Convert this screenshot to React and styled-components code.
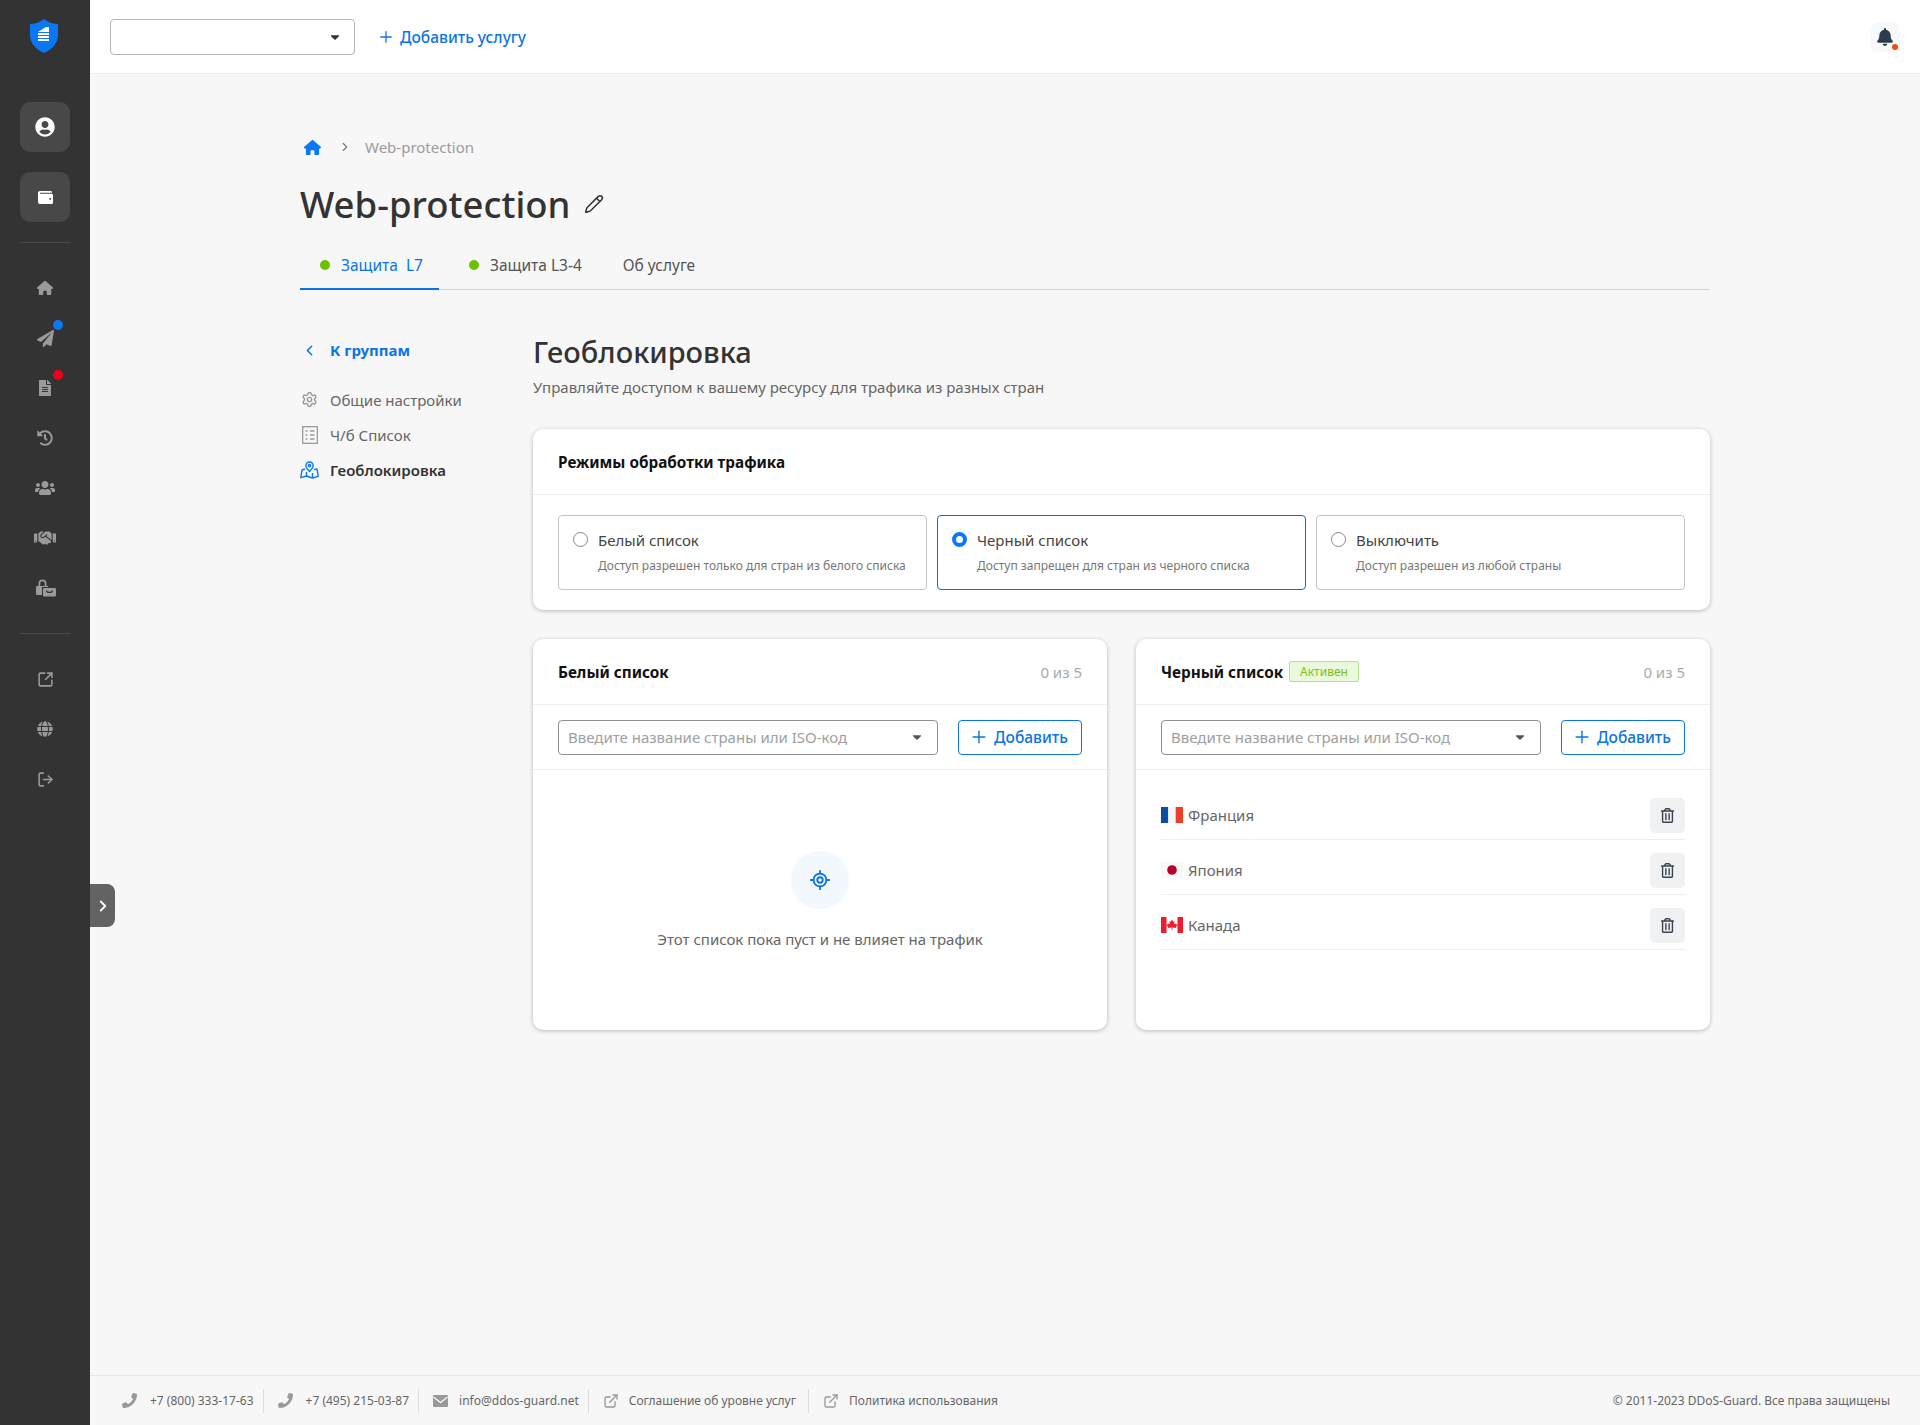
import React from 'react'
import styled, { createGlobalStyle } from 'styled-components'
import { ChevronLeft, ChevronRight, ExternalLink, LocateFixed, LogOut, Pencil, Plus, Settings, SquareArrowOutUpRight } from 'lucide-react'
import { FaBell, FaCaretDown, FaFileAlt, FaGlobe, FaHandshake, FaHistory, FaPaperPlane, FaPhoneAlt, FaRegTrashAlt, FaUserCircle, FaUsers, FaWallet } from 'react-icons/fa'
import { FaHouse } from 'react-icons/fa6'

const Global = createGlobalStyle`
  html, body { margin: 0; padding: 0; }
  body { font-family: "Noto Sans", "Open Sans", sans-serif; background: #f7f7f7; color: #333; }
  * { box-sizing: border-box; }
`

const BLUE = '#0b74e5'

function Logo() {
  return (
    <svg width="30" height="34" viewBox="0 0 30 34">
      <path d="M15 0 C19 3 24 5 29 5 L29 16 C29 25 22 31 15 34 C8 31 1 25 1 16 L1 5 C6 5 11 3 15 0Z" fill="#0a78f5" />
      <path d="M9 22 L9 13 L17 8 L20 8 L20 22Z" fill="#fff" />
      <path d="M9 13.5h11M9 16.5h11M9 19.5h11" stroke="#0a78f5" strokeWidth="1" />
    </svg>
  )
}

function LockIcon() {
  return (
    <svg width="21" height="18" viewBox="0 0 21 18" fill="#9a9a9a">
      <path fillRule="evenodd" d="M2 7h1.5V4.5a4 4 0 0 1 8 0V7H13v1H7v8H2a1 1 0 0 1-1-1V8a1 1 0 0 1 1-1zm3.2 0h4.6V4.5a2.3 2.3 0 0 0-4.6 0z" />
      <rect x="8" y="9" width="13" height="8.5" rx="1.2" />
      <path d="M11.5 11.5c0 2.6 6 2.6 6 0" stroke="#333" strokeWidth="1.2" fill="none" />
    </svg>
  )
}

function ListIcon() {
  return (
    <svg width="16" height="18" viewBox="0 0 16 18" fill="none" stroke="#9a9a9a" strokeWidth="1.3">
      <rect x="0.7" y="0.7" width="14.6" height="16.6" />
      <path d="M3.5 5h2M3.5 9h2M3.5 13h2M8 5h4.5M8 9h4.5M8 13h4.5" />
    </svg>
  )
}

function GeoIcon() {
  return (
    <svg width="19" height="18" viewBox="0 0 19 18" fill="none" stroke="#0a78f5" strokeWidth="1.4" strokeLinejoin="round">
      <path d="M9.5 1a3.6 3.6 0 0 0-3.6 3.6c0 2.4 3.6 5.9 3.6 5.9s3.6-3.5 3.6-5.9A3.6 3.6 0 0 0 9.5 1z" />
      <circle cx="9.5" cy="4.6" r="1.1" />
      <path d="M5 8 L2 9 L0.8 16.6 L6.5 15 L12.5 17 L18.2 15.4 L17 8 L14 8.6 M6.5 11 V15 M12.5 12 V17" />
    </svg>
  )
}

function MailIcon() {
  return (
    <svg width="15" height="12" viewBox="0 0 15 12">
      <rect width="15" height="12" rx="1" fill="#999" />
      <path d="M0.5 2 L7.5 7.5 L14.5 2" stroke="#f7f7f7" strokeWidth="1.4" fill="none" />
    </svg>
  )
}

function Flag({ code }) {
  if (code === 'fr') {
    return (
      <svg width="22" height="16" viewBox="0 0 22 16">
        <rect width="7.3" height="16" fill="#0b4ea2" />
        <rect x="7.3" width="7.4" height="16" fill="#f5f5f5" />
        <rect x="14.7" width="7.3" height="16" fill="#ee3e2c" />
      </svg>
    )
  }
  if (code === 'jp') {
    return (
      <svg width="22" height="16" viewBox="0 0 22 16">
        <rect width="22" height="16" fill="#f8f8f8" />
        <circle cx="11" cy="8" r="4.8" fill="#bc002d" />
      </svg>
    )
  }
  return (
    <svg width="22" height="16" viewBox="0 0 22 16">
      <rect width="22" height="16" fill="#fff" />
      <rect width="5.5" height="16" fill="#ee1c2e" />
      <rect x="16.5" width="5.5" height="16" fill="#ee1c2e" />
      <path d="M11 2.5 L12.2 4.8 L13.6 4.2 L13.2 7.2 L15.2 6.4 L15.6 7.8 L17 8 L14.8 10 L15 11 L11.4 10.6 L11.4 13 L10.6 13 L10.6 10.6 L7 11 L7.2 10 L5 8 L6.4 7.8 L6.8 6.4 L8.8 7.2 L8.4 4.2 L9.8 4.8Z" fill="#ee1c2e" />
    </svg>
  )
}

function ListHead({ title, active }) {
  return (
    <CardHead>
      <HeadLeft>
        <CardTitle>{title}</CardTitle>
        {active && <Badge>Активен</Badge>}
      </HeadLeft>
      <Count>0 из 5</Count>
    </CardHead>
  )
}

function AddRow() {
  return (
    <AddBar>
      <CountryInput>
        <span>Введите название страны или ISO-код</span>
        <FaCaretDown size={14} color="#555" />
      </CountryInput>
      <AddButton><Plus size={20} strokeWidth={1.7} />Добавить</AddButton>
    </AddBar>
  )
}

const railTop = [
  [<FaHouse size={16} color="#9a9a9a" />],
  [<FaPaperPlane size={17} color="#9a9a9a" />, '#0a78f5'],
  [<FaFileAlt size={16} color="#9a9a9a" />, '#f0001c'],
  [<FaHistory size={16} color="#9a9a9a" />],
  [<FaUsers size={20} color="#9a9a9a" />],
  [<FaHandshake size={22} color="#9a9a9a" />],
  [<LockIcon />],
]
const railBottom = [
  <SquareArrowOutUpRight size={17} color="#9a9a9a" strokeWidth={2.2} />,
  <FaGlobe size={16} color="#9a9a9a" />,
  <LogOut size={17} color="#9a9a9a" strokeWidth={2.2} />,
]
const modes = [
  ['Белый список', 'Доступ разрешен только для стран из белого списка', false],
  ['Черный список', 'Доступ запрещен для стран из черного списка', true],
  ['Выключить', 'Доступ разрешен из любой страны', false],
]
const countries = [['fr', 'Франция'], ['jp', 'Япония'], ['ca', 'Канада']]

export default function App() {
  return (
    <Page>
      <Global />
      <Rail>
        <LogoBox><Logo /></LogoBox>
        <RailButton><FaUserCircle size={20} color="#fff" /></RailButton>
        <RailButton><FaWallet size={15} color="#fff" /></RailButton>
        <RailLine />
        <RailList>
          {railTop.map(([icon, dot], i) => (
            <RailItem key={i}>
              {icon}
              {dot && <RailDot $color={dot} />}
            </RailItem>
          ))}
        </RailList>
        <RailLine $lower />
        <RailList>
          {railBottom.map((icon, i) => (
            <RailItem key={i}>{icon}</RailItem>
          ))}
        </RailList>
        <RailToggle><ChevronRight size={18} color="#fff" strokeWidth={2.4} /></RailToggle>
      </Rail>

      <Main>
        <TopBar>
          <ServiceSelect><FaCaretDown size={14} color="#333" /></ServiceSelect>
          <AddService><Plus size={18} strokeWidth={1.7} />Добавить услугу</AddService>
          <BellBox>
            <FaBell size={18} color="#2d3b4d" />
            <BellDot />
          </BellBox>
        </TopBar>

        <Content>
          <Crumbs>
            <FaHouse size={17} color="#0a78f5" />
            <CrumbArrow size={14} color="#777" />
            <CrumbText>Web-protection</CrumbText>
          </Crumbs>
          <TitleRow>
            <Title>Web-protection</Title>
            <Pencil size={20} color="#333" strokeWidth={1.8} />
          </TitleRow>
          <Tabs>
            <Tab $active><TabDot />Защита&nbsp; L7</Tab>
            <Tab><TabDot />Защита L3-4</Tab>
            <Tab $plain>Об услуге</Tab>
          </Tabs>

          <Columns>
            <SideNav>
              <BackLink><ChevronLeft size={17} strokeWidth={2.2} />К группам</BackLink>
              <NavItem><NavIcon><Settings size={17} color="#9a9a9a" /></NavIcon>Общие настройки</NavItem>
              <NavItem><NavIcon><ListIcon /></NavIcon>Ч/б Список</NavItem>
              <NavItem $active><NavIcon><GeoIcon /></NavIcon>Геоблокировка</NavItem>
            </SideNav>

            <Section>
              <Heading>Геоблокировка</Heading>
              <Lead>Управляйте доступом к вашему ресурсу для трафика из разных стран</Lead>

              <Card>
                <CardHead><CardTitle>Режимы обработки трафика</CardTitle></CardHead>
                <Modes>
                  {modes.map(([name, text, on]) => (
                    <Mode key={name} $on={on}>
                      <Radio $on={on} />
                      <div>
                        <ModeName>{name}</ModeName>
                        <ModeText>{text}</ModeText>
                      </div>
                    </Mode>
                  ))}
                </Modes>
              </Card>

              <ListGrid>
                <ListCard>
                  <ListHead title="Белый список" />
                  <AddRow />
                  <Empty>
                    <EmptyIcon><LocateFixed size={22} color={BLUE} strokeWidth={2} /></EmptyIcon>
                    <EmptyText>Этот список пока пуст и не влияет на трафик</EmptyText>
                  </Empty>
                </ListCard>

                <ListCard>
                  <ListHead title="Черный список" active />
                  <AddRow />
                  <Countries>
                    {countries.map(([code, name]) => (
                      <Country key={code}>
                        <Flag code={code} />
                        <CountryName>{name}</CountryName>
                        <TrashButton><FaRegTrashAlt size={15} color="#3a4450" /></TrashButton>
                      </Country>
                    ))}
                  </Countries>
                </ListCard>
              </ListGrid>
            </Section>
          </Columns>
        </Content>

        <Footer>
          <FootItem><PhoneIcon size={15} color="#999" />+7 (800) 333-17-63</FootItem>
          <FootItem><PhoneIcon size={15} color="#999" />+7 (495) 215-03-87</FootItem>
          <FootItem $gap={11}><MailIcon />info@ddos-guard.net</FootItem>
          <FootItem $gap={10} $wide><ExternalLink size={16} color="#999" />Соглашение об уровне услуг</FootItem>
          <FootItem $gap={10} $last><ExternalLink size={16} color="#999" />Политика использования</FootItem>
          <Copy>© 2011-2023 DDoS-Guard. Все права защищены</Copy>
        </Footer>
      </Main>
    </Page>
  )
}

const Page = styled.div`
  display: flex;
  min-height: 1425px;
`

const Rail = styled.aside`
  position: relative;
  width: 90px;
  flex-shrink: 0;
  background: #333;
  display: flex;
  flex-direction: column;
  align-items: center;
`

const LogoBox = styled.div`
  height: 102px;
  width: 100%;
  padding: 19px 2px 0 0;
  display: flex;
  justify-content: center;
  align-items: flex-start;
`

const RailButton = styled.div`
  width: 50px;
  height: 50px;
  margin-bottom: 20px;
  background: #484848;
  border-radius: 10px;
  display: flex;
  align-items: center;
  justify-content: center;
`

const RailLine = styled.div`
  width: 50px;
  height: 1px;
  background: #4a4a4a;
  margin: ${p => (p.$lower ? '20px 0 20px' : '0 0 20px')};
`

const RailList = styled.div`
  display: flex;
  flex-direction: column;
  align-items: center;
`

const RailItem = styled.div`
  position: relative;
  width: 50px;
  height: 50px;
  display: flex;
  align-items: center;
  justify-content: center;
`

const RailDot = styled.span`
  position: absolute;
  top: 7px;
  right: 7px;
  width: 10px;
  height: 10px;
  border-radius: 50%;
  background: ${p => p.$color};
`

const RailToggle = styled.div`
  position: absolute;
  left: 90px;
  top: 884px;
  width: 25px;
  height: 43px;
  background: #636363;
  border-radius: 0 8px 8px 0;
  display: flex;
  align-items: center;
  justify-content: center;
`

const Main = styled.main`
  flex: 1;
  min-width: 0;
  display: flex;
  flex-direction: column;
`

const TopBar = styled.header`
  height: 74px;
  background: #fff;
  border-bottom: 1px solid #eee;
  padding: 0 20px;
  display: flex;
  align-items: center;
  gap: 22px;
`

const ServiceSelect = styled.div`
  width: 245px;
  height: 36px;
  margin-top: 1px;
  background: #fff;
  border: 1px solid #b5b5b5;
  border-radius: 4px;
  display: flex;
  align-items: center;
  justify-content: flex-end;
  padding-right: 12px;
`

const AddService = styled.div`
  display: flex;
  align-items: center;
  gap: 5px;
  font-size: 15.5px;
  font-weight: 500;
  color: ${BLUE};
`

const BellBox = styled.div`
  position: relative;
  margin-left: auto;
  width: 30px;
  height: 30px;
  background: #f8f9fa;
  border-radius: 8px;
  display: flex;
  align-items: center;
  justify-content: center;
`

const BellDot = styled.span`
  position: absolute;
  right: 2px;
  bottom: 2px;
  width: 6px;
  height: 6px;
  border-radius: 50%;
  background: #f04a0c;
`

const Content = styled.div`
  flex: 1;
  padding: 62px 210px 0;
`

const Crumbs = styled.div`
  height: 22px;
  padding-left: 4px;
  display: flex;
  align-items: center;
  gap: 14px;
`

const CrumbArrow = styled(ChevronRight)`
  margin-left: 3px;
`

const CrumbText = styled.span`
  margin-left: -1px;
  font-size: 15px;
  color: #9c9c9c;
`

const TitleRow = styled.div`
  margin-top: 21px;
  height: 50px;
  display: flex;
  align-items: center;
  gap: 14px;
`

const Title = styled.h1`
  margin: 0;
  font-size: 36.5px;
  font-weight: 500;
  color: #333;
`

const Tabs = styled.div`
  margin-top: 11px;
  height: 50px;
  border-bottom: 1px solid #d5d5d5;
  display: flex;
`

const Tab = styled.div`
  height: 50px;
  padding: 2px 16px 0 ${p => (p.$plain ? '15px' : '20px')};
  margin-right: 10px;
  display: flex;
  align-items: center;
  gap: 11px;
  font-size: 15.5px;
  color: ${p => (p.$active ? BLUE : '#555')};
  border-bottom: 2px solid ${p => (p.$active ? BLUE : 'transparent')};
`

const TabDot = styled.span`
  width: 10px;
  height: 10px;
  border-radius: 50%;
  background: #6cc000;
`

const Columns = styled.div`
  display: flex;
`

const SideNav = styled.nav`
  width: 233px;
  flex-shrink: 0;
  padding-top: 48px;
  display: flex;
  flex-direction: column;
`

const BackLink = styled.div`
  height: 24px;
  margin-bottom: 20px;
  display: flex;
  align-items: center;
  gap: 12px;
  padding-left: 1px;
  font-size: 15px;
  font-weight: 700;
  color: ${BLUE};
`

const NavItem = styled.div`
  height: 35px;
  display: flex;
  align-items: center;
  gap: 11px;
  font-size: 15px;
  font-weight: ${p => (p.$active ? 600 : 400)};
  color: ${p => (p.$active ? '#333' : '#666')};
`

const NavIcon = styled.span`
  width: 19px;
  display: flex;
  justify-content: center;
`

const Section = styled.section`
  flex: 1;
  min-width: 0;
  padding-top: 42px;
`

const Heading = styled.h2`
  margin: 0;
  height: 40px;
  line-height: 40px;
  font-size: 29px;
  font-weight: 500;
  color: #333;
`

const Lead = styled.p`
  margin: 3px 0 0;
  height: 24px;
  line-height: 24px;
  font-size: 15px;
  color: #666;
`

const Card = styled.div`
  margin-top: 30px;
  background: #fff;
  border-radius: 10px;
  box-shadow: 0 1px 4px rgba(0, 0, 0, 0.25);
`

const CardHead = styled.div`
  height: 66px;
  padding: 0 25px;
  border-bottom: 1px solid #eee;
  display: flex;
  align-items: center;
  justify-content: space-between;
`

const HeadLeft = styled.div`
  display: flex;
  align-items: center;
  gap: 6px;
`

const CardTitle = styled.div`
  font-size: 15.3px;
  font-weight: 700;
  color: #111;
`

const Badge = styled.span`
  height: 21px;
  padding: 0 10px;
  background: #eaf8dc;
  border: 1px solid #b6e08c;
  border-radius: 2px;
  font-size: 12px;
  line-height: 19px;
  color: #77c31a;
`

const Count = styled.span`
  font-size: 15px;
  color: #aaa;
`

const Modes = styled.div`
  padding: 20px 25px;
  display: grid;
  grid-template-columns: repeat(3, 1fr);
  gap: 10px;
`

const Mode = styled.div`
  height: 75px;
  padding: 13px 14px;
  display: flex;
  gap: 10px;
  border: 1px solid ${p => (p.$on ? '#0a6fd8' : '#c4c4c4')};
  border-radius: 4px;
`

const Radio = styled.span`
  width: 15px;
  height: 15px;
  margin-top: 3px;
  flex-shrink: 0;
  border-radius: 50%;
  background: #fff;
  border: ${p => (p.$on ? '4px solid #0a78f5' : '1px solid #888')};
`

const ModeName = styled.div`
  font-size: 15px;
  line-height: 22px;
  color: #444;
`

const ModeText = styled.div`
  margin-top: 7px;
  font-size: 12px;
  line-height: 16px;
  color: #777;
`

const ListGrid = styled.div`
  margin-top: 29px;
  display: grid;
  grid-template-columns: 1fr 1fr;
  gap: 29px;
`

const ListCard = styled(Card)`
  margin-top: 0;
  height: 391px;
  display: flex;
  flex-direction: column;
`

const AddBar = styled.div`
  height: 65px;
  padding: 0 25px;
  border-bottom: 1px solid #eee;
  display: flex;
  align-items: center;
  gap: 20px;
`

const CountryInput = styled.div`
  flex: 1;
  height: 35px;
  padding: 0 13px 0 9px;
  background: #fff;
  border: 1px solid #8f8f8f;
  border-radius: 4px;
  display: flex;
  align-items: center;
  justify-content: space-between;
  font-size: 15px;
  color: #a0a0a0;
`

const AddButton = styled.div`
  width: 124px;
  height: 35px;
  padding-right: 3px;
  background: #fff;
  border: 1px solid ${BLUE};
  border-radius: 4px;
  display: flex;
  align-items: center;
  justify-content: center;
  gap: 5px;
  font-size: 15.5px;
  font-weight: 500;
  color: ${BLUE};
`

const Empty = styled.div`
  flex: 1;
  padding-top: 81px;
  display: flex;
  flex-direction: column;
  align-items: center;
`

const EmptyIcon = styled.div`
  width: 58px;
  height: 58px;
  background: #f3f8ff;
  border-radius: 50%;
  display: flex;
  align-items: center;
  justify-content: center;
`

const EmptyText = styled.div`
  margin-top: 20px;
  font-size: 15px;
  color: #666;
`

const Countries = styled.div`
  padding: 15px 25px 0;
`

const Country = styled.div`
  height: 55px;
  padding-top: 6px;
  border-bottom: 1px solid #eee;
  display: flex;
  align-items: center;
  gap: 5px;
`

const CountryName = styled.span`
  flex: 1;
  font-size: 15px;
  color: #666;
`

const TrashButton = styled.div`
  width: 35px;
  height: 35px;
  background: #eff1f3;
  border-radius: 5px;
  display: flex;
  align-items: center;
  justify-content: center;
`

const Footer = styled.footer`
  height: 50px;
  padding: 0 30px 0 32px;
  border-top: 1px solid #e8e8e8;
  display: flex;
  align-items: center;
  font-size: 12px;
  color: #666;
`

const FootItem = styled.div`
  height: 24px;
  padding-right: ${p => (p.$wide ? 12 : 9)}px;
  margin-right: 14px;
  display: flex;
  align-items: center;
  gap: ${p => p.$gap || 13}px;
  border-right: ${p => (p.$last ? 'none' : '1px solid #ddd')};
`

const PhoneIcon = styled(FaPhoneAlt)`
  transform: scaleX(-1);
`

const Copy = styled.div`
  margin-left: auto;
`
